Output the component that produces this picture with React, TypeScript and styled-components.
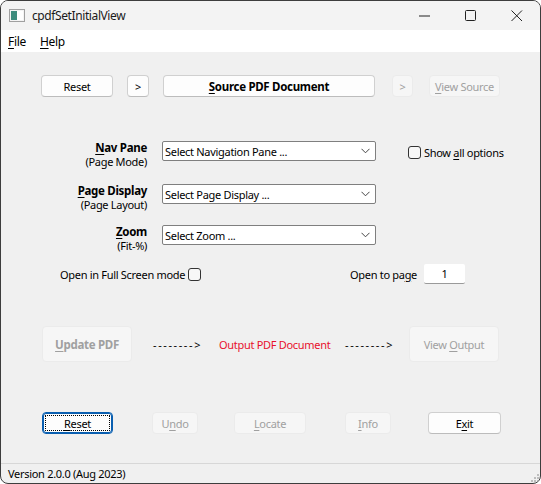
import styled, { createGlobalStyle, css } from "styled-components";

const GlobalStyle = createGlobalStyle`
  html, body {
    margin: 0;
    padding: 0;
    background: #ffffff;
  }
  body {
    font-family: "Noto Sans", "Open Sans", sans-serif;
    font-size: 11px;
    letter-spacing: -0.3px;
    color: #000;
  }
  * {
    box-sizing: border-box;
  }
`;

const Window = styled.div`
  width: 541px;
  height: 484px;
  border: 1px solid #3d3d3d;
  border-radius: 8px;
  overflow: hidden;
  display: flex;
  flex-direction: column;
  background: #f0f0f0;
`;

const TitleBar = styled.div`
  height: 29px;
  background: #f3f3f3;
  display: flex;
  align-items: center;
  padding-left: 8px;
`;

const Title = styled.span`
  margin-left: 7px;
  font-size: 12px;
  letter-spacing: -0.4px;
  color: #1a1a1a;
`;

const Controls = styled.div`
  margin-left: auto;
  display: flex;
  height: 100%;
`;

const ControlBox = styled.div`
  width: 46px;
  height: 100%;
  display: flex;
  align-items: center;
  justify-content: center;
`;

const MenuBar = styled.div`
  height: 22px;
  background: #ffffff;
  display: flex;
  align-items: center;
  padding-left: 7px;
  gap: 14px;
  font-size: 12px;
`;

const U = styled.span`
  text-decoration: underline;
  text-underline-offset: 2px;
`;

const Body = styled.div`
  flex: 1;
  display: flex;
  flex-direction: column;
`;

const Row = styled.div<{ $mt: number; $h?: number }>`
  display: flex;
  align-items: center;
  margin-top: ${(p) => p.$mt}px;
  ${(p) => p.$h && css`height: ${p.$h}px;`}
`;

const Btn = styled.button<{
  $w: number;
  $h?: number;
  $ml: number;
  $bold?: boolean;
  $focus?: boolean;
}>`
  position: relative;
  width: ${(p) => p.$w}px;
  height: ${(p) => p.$h ?? 22}px;
  margin-left: ${(p) => p.$ml}px;
  padding: 0;
  flex-shrink: 0;
  font-family: inherit;
  font-size: ${(p) => (p.$bold ? 11.5 : 11)}px;
  letter-spacing: inherit;
  font-weight: ${(p) => (p.$bold ? 700 : 400)};
  color: #000;
  background: #fdfdfd;
  border: 1px solid #d0d0d0;
  border-bottom-color: #bcbcbc;
  border-radius: 4px;

  &:disabled {
    background: #f6f6f6;
    border-color: #ebebeb;
    color: #a0a0a0;
  }

  ${(p) =>
    p.$focus &&
    css`
      border: 1px solid #0a5fb0;
      box-shadow: inset 0 0 0 1px #0a5fb0;
      &::after {
        content: "";
        position: absolute;
        inset: 2px;
        border: 1px dotted #000;
        border-radius: 1px;
      }
    `}
`;

const FormRow = styled.div<{ $mt: number }>`
  display: flex;
  align-items: flex-start;
  margin-top: ${(p) => p.$mt}px;
`;

const Label = styled.div`
  width: 146px;
  text-align: right;
  line-height: 14px;
`;

const Strong = styled.div`
  font-weight: 700;
  font-size: 11.5px;
`;

const Select = styled.div`
  width: 214px;
  height: 20px;
  margin-left: 15px;
  background: #fff;
  border: 1px solid #7f7f7f;
  border-radius: 2px;
  display: flex;
  align-items: center;
  padding-left: 2px;
  padding-right: 5px;
  justify-content: space-between;
`;

const CheckLabel = styled.label<{ $ml: number }>`
  display: flex;
  align-items: center;
  margin-left: ${(p) => p.$ml}px;
  margin-top: 4px;
  gap: 3px;
`;

const Check = styled.span`
  width: 13px;
  height: 13px;
  border: 1px solid #333;
  border-radius: 3px;
  background: #f7f7f7;
  flex-shrink: 0;
`;

const OptionGroup = styled.div`
  width: 290px;
  margin-left: 59px;
  display: flex;
  align-items: center;
  gap: 3px;
  flex-shrink: 0;
`;

const Text = styled.span<{ $ml?: number; $w?: number; $color?: string; $spread?: boolean }>`
  margin-left: ${(p) => p.$ml ?? 0}px;
  ${(p) => p.$w && css`width: ${p.$w}px;`}
  color: ${(p) => p.$color ?? "#000"};
  ${(p) => p.$spread && css`letter-spacing: 1.6px;`}
  white-space: nowrap;
  flex-shrink: 0;
`;

const PageInput = styled.div`
  width: 41px;
  height: 20px;
  margin-left: 8px;
  background: #fff;
  border-bottom: 1px solid #9a9a9a;
  border-radius: 2px;
  display: flex;
  align-items: center;
  justify-content: center;
`;

const StatusBar = styled.div`
  height: 20px;
  border-top: 1px solid #d7d7d7;
  display: flex;
  align-items: center;
  padding-left: 7px;
  position: relative;
`;

const Grip = styled.svg`
  position: absolute;
  right: 1px;
  bottom: 1px;
`;

const Chevron = () => (
  <svg width="9" height="6" viewBox="0 0 9 6">
    <path d="M0.5 0.8 L4.5 4.8 L8.5 0.8" fill="none" stroke="#444" strokeWidth="1" />
  </svg>
);

const AppIcon = () => (
  <svg width="16" height="13" viewBox="0 0 16 13">
    <rect x="0.5" y="0.5" width="15" height="12" fill="#f4f4f4" stroke="#a0a0a0" />
    <rect x="2" y="2" width="6" height="9" fill="#3d8c7d" />
    <rect x="8" y="2" width="6" height="9" fill="#ffffff" />
  </svg>
);

export default function App() {
  return (
    <>
      <GlobalStyle />
      <Window>
        <TitleBar>
          <AppIcon />
          <Title>cpdfSetInitialView</Title>
          <Controls>
            <ControlBox>
              <svg width="12" height="2" viewBox="0 0 12 2">
                <rect x="0" y="0.5" width="11" height="1" fill="#222" />
              </svg>
            </ControlBox>
            <ControlBox>
              <svg width="12" height="12" viewBox="0 0 12 12">
                <rect x="0.5" y="0.5" width="10" height="10" rx="1" fill="none" stroke="#222" />
              </svg>
            </ControlBox>
            <ControlBox>
              <svg width="12" height="12" viewBox="0 0 12 12">
                <path d="M0.5 0.5 L11 11 M11 0.5 L0.5 11" stroke="#222" strokeWidth="1" />
              </svg>
            </ControlBox>
          </Controls>
        </TitleBar>
        <MenuBar>
          <span>
            <U>F</U>ile
          </span>
          <span>
            <U>H</U>elp
          </span>
        </MenuBar>
        <Body>
          <Row $mt={23}>
            <Btn $w={72} $ml={40}>Reset</Btn>
            <Btn $w={22} $ml={14}>&gt;</Btn>
            <Btn $w={212} $ml={14} $bold>
              <U>S</U>ource PDF Document
            </Btn>
            <Btn $w={21} $ml={17} disabled>
              &gt;
            </Btn>
            <Btn $w={71} $ml={16} disabled>
              <U>V</U>iew Source
            </Btn>
          </Row>

          <FormRow $mt={44}>
            <Label>
              <Strong>
                <U>N</U>av Pane
              </Strong>
              (Page Mode)
            </Label>
            <Select>
              Select Navigation Pane ...
              <Chevron />
            </Select>
            <CheckLabel $ml={32}>
              <Check />
              <span>
                Show <U>a</U>ll options
              </span>
            </CheckLabel>
          </FormRow>

          <FormRow $mt={15}>
            <Label>
              <Strong>
                <U>P</U>age Display
              </Strong>
              (Page Layout)
            </Label>
            <Select>
              Select Page Display ...
              <Chevron />
            </Select>
          </FormRow>

          <FormRow $mt={13}>
            <Label>
              <Strong>
                <U>Z</U>oom
              </Strong>
              (Fit-%)
            </Label>
            <Select>
              Select Zoom ...
              <Chevron />
            </Select>
          </FormRow>

          <Row $mt={11} $h={20}>
            <OptionGroup>
              <Text>Open in Full Screen mode</Text>
              <Check />
            </OptionGroup>
            <Text $w={66}>
              Open to pa<U>g</U>e
            </Text>
            <PageInput>1</PageInput>
          </Row>

          <Row $mt={42}>
            <Btn $w={90} $h={36} $ml={41} $bold disabled>
              <U>U</U>pdate PDF
            </Btn>
            <Text $ml={21} $w={47} $spread>
              --------&gt;
            </Text>
            <Text $ml={19} $w={108} $color="#e8112d">
              Output PDF Document
            </Text>
            <Text $ml={18} $w={48} $spread>
              --------&gt;
            </Text>
            <Btn $w={90} $h={36} $ml={16} disabled>
              View <U>O</U>utput
            </Btn>
          </Row>

          <Row $mt={50}>
            <Btn $w={71} $ml={41} $focus>
              <U>R</U>eset
            </Btn>
            <Btn $w={46} $ml={39} disabled>
              U<U>n</U>do
            </Btn>
            <Btn $w={72} $ml={36} disabled>
              <U>L</U>ocate
            </Btn>
            <Btn $w={46} $ml={39} disabled>
              <U>I</U>nfo
            </Btn>
            <Btn $w={73} $ml={37}>
              E<U>x</U>it
            </Btn>
          </Row>
        </Body>
        <StatusBar>
          Version 2.0.0 (Aug 2023)
          <Grip width="8" height="8" viewBox="0 0 8 8">
            <rect x="6" y="0" width="2" height="2" fill="#bdbdbd" />
            <rect x="3" y="3" width="2" height="2" fill="#bdbdbd" />
            <rect x="6" y="3" width="2" height="2" fill="#bdbdbd" />
            <rect x="0" y="6" width="2" height="2" fill="#bdbdbd" />
            <rect x="3" y="6" width="2" height="2" fill="#bdbdbd" />
            <rect x="6" y="6" width="2" height="2" fill="#bdbdbd" />
          </Grip>
        </StatusBar>
      </Window>
    </>
  );
}
